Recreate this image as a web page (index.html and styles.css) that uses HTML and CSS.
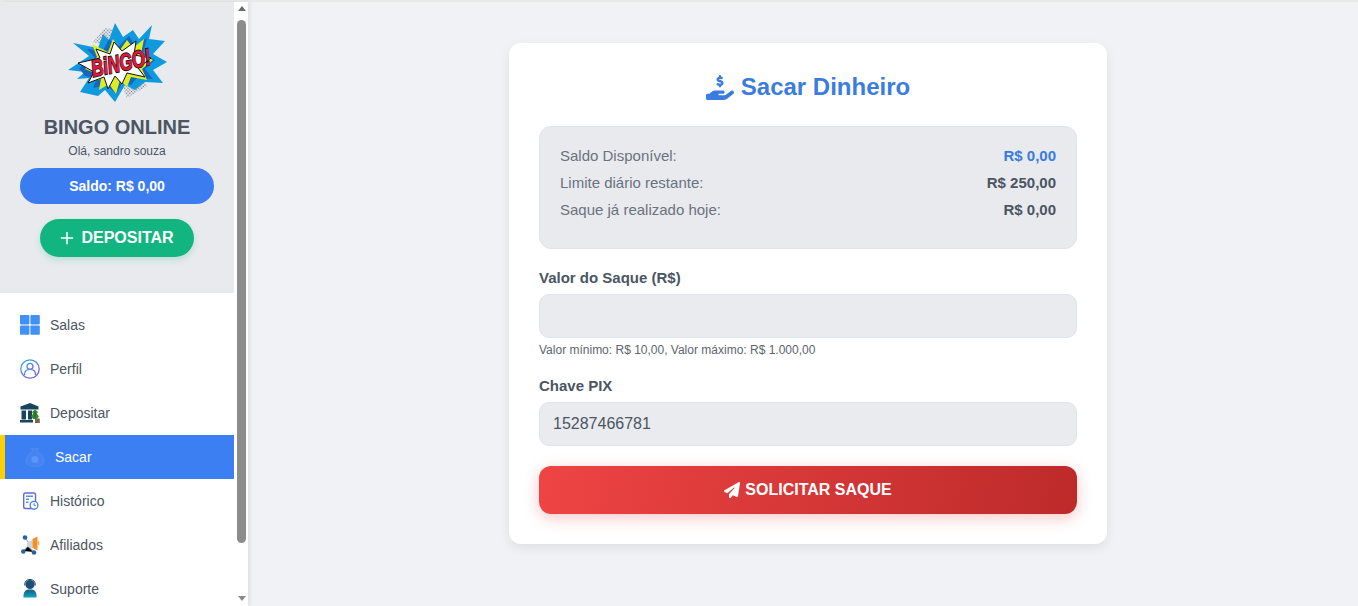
FILE: index.html
```html
<!DOCTYPE html>
<html lang="pt-BR">
<head>
<meta charset="utf-8">
<title>Sacar Dinheiro</title>
<link rel="stylesheet" href="styles.css">
</head>
<body>
<div class="layout">
  <aside class="sidebar">
    <div class="sidebar-content">
      <header class="profile">
        <svg class="logo" viewBox="0 0 100 80" aria-hidden="true">
          <defs>
            <pattern id="dots" width="2.400" height="2.400" patternUnits="userSpaceOnUse" patternTransform="rotate(45)"><circle cx="1.200" cy="1.200" r=".7" fill="#6a6f7c"/></pattern>
          </defs>
          <polygon fill="url(#dots)" points="26,20 38,6 52,8 48,26"/>
          <polygon fill="url(#dots)" points="52,54 74,50 80,64 60,76"/>
          <polygon fill="#0f9ae0" points="1,48 22,34 6,21 31,26 36,12 42,18 48,1 56,15 66,8 72,17 85,3 82,17 98,19 86,32 100,40 86,48 96,61 78,60 68,68 58,63 48,80 38,68 31,74 13,70 22,56 10,57 18,50"/>
          <polygon fill="#1766bd" points="12,46 28,36 20,27 36,29 42,17 50,26 62,14 68,24 80,16 76,31 88,38 78,47 86,57 70,56 64,63 56,60 49,72 40,63 26,66 30,56 18,54"/>
          <polygon fill="#dcef1e" points="18,47 30,35 25,22 41,30 46,17 53,28 60,18 66,26 77,17 74,32 86,38 75,47 80,58 64,55 60,65 53,58 49,72 42,62 32,68 34,57 22,60 28,51"/>
          <polygon fill="#fff" stroke="#111" stroke-width="1" points="11,41 33,36 29,27 43,32 47,20 55,29 69,19 67,33 84,36 71,46 78,55 60,51 55,62 48,54 41,67 37,55 21,61 27,50"/>
          <text class="logo-text" transform="rotate(-12 54 43) translate(54 49) scale(1 1.200)" text-anchor="middle" textLength="60" lengthAdjust="spacingAndGlyphs">BiNGO!</text>
        </svg>
        <h1 class="brand">BINGO ONLINE</h1>
        <p class="greeting">Olá, sandro souza</p>
        <div class="balance">Saldo: R$ 0,00</div>
        <a class="deposit-btn" href="#">
          <svg class="plus" viewBox="0 0 16 16" aria-hidden="true"><path d="M8 1v14M1 8h14"/></svg>
          DEPOSITAR
        </a>
      </header>
      <nav class="nav">
        <a class="nav-item" href="#">
          <svg class="nav-icon" viewBox="0 0 20 20" aria-hidden="true"><g fill="#4190f5"><rect x="0" y="0" width="9.400" height="9.400" rx=".8"/><rect x="10.400" y="0" width="9.400" height="9.400" rx=".8"/><rect x="0" y="10.400" width="9.400" height="9.400" rx=".8"/><rect x="10.400" y="10.400" width="9.400" height="9.400" rx=".8"/></g></svg>
          <span>Salas</span>
        </a>
        <a class="nav-item" href="#">
          <svg class="nav-icon" viewBox="0 0 20 20" aria-hidden="true"><defs><linearGradient id="pg" x1="0" y1="0" x2=".6" y2="1"><stop offset="0" stop-color="#38a6e6"/><stop offset="1" stop-color="#7d5fdc"/></linearGradient></defs><g fill="none" stroke="url(#pg)" stroke-width="1.300"><circle cx="10" cy="10" r="9.200"/><circle cx="10" cy="7.300" r="3"/><path d="M4.500 16c-.4-3.800 2.200-5.600 5.500-5.600s5.900 1.800 5.500 5.600"/></g></svg>
          <span>Perfil</span>
        </a>
        <a class="nav-item" href="#">
          <svg class="nav-icon" viewBox="0 0 20 20" aria-hidden="true"><path fill="#17455f" d="M10 0 18.500 3.500V6.500H.5V3.500zM1.500 7.500H6V16.500H1.500zM8 7.500H12V16.500H8zM0 17h13V19.500H0z"/><path fill="#3d8a2e" d="M15 6.500l3 2.500-1 1.800 2 2.700-2 2.500h-4l-2-2.500 2-2.700-1-1.800z"/><path fill="#1f6d2a" d="M14.300 9h1.400v6h-1.400z"/><path fill="#7d6650" d="M15 15.500h4.800V20H15z"/></svg>
          <span>Depositar</span>
        </a>
        <a class="nav-item is-active" href="#">
          <svg class="nav-icon" viewBox="0 0 20 20" aria-hidden="true"><path fill="#4684f3" stroke="#5590f5" stroke-width=".7" d="M6.500 1 10 2.200 13.500 1 12.500 4.800C16.500 6.800 19 10.500 19 14c0 3.800-3.500 5.500-9 5.500S1 17.800 1 14c0-3.500 2.500-7.200 6.500-9.200z"/><circle cx="10" cy="12.500" r="3.500" fill="#5a96f6"/></svg>
          <span>Sacar</span>
        </a>
        <a class="nav-item" href="#">
          <svg class="nav-icon" viewBox="0 0 20 20" aria-hidden="true"><rect x="3.700" y="2" width="11.800" height="15.500" rx="1.800" fill="#fff" stroke="#6a66d8" stroke-width="1.400"/><path stroke="#5b8fe0" stroke-width="1.400" d="M6 5.300h7M6 8.300h3M6 11.300h2.500"/><circle cx="14" cy="14.200" r="3.900" fill="#fff" stroke="#3f7fe0" stroke-width="1.300"/><path fill="none" stroke="#3f7fe0" stroke-width="1" d="M14 12.200V14.400h1.800"/></svg>
          <span>Histórico</span>
        </a>
        <a class="nav-item" href="#">
          <svg class="nav-icon" viewBox="0 0 20 20" aria-hidden="true"><path stroke="#9db2d0" stroke-width="1.100" d="M5 3 9 8M3.500 16 8 11l6 6"/><g fill="#2b5f9c"><circle cx="5" cy="2.500" r="2.300"/><circle cx="3.300" cy="16.500" r="2.300"/><circle cx="14" cy="17.500" r="2.300"/></g><path fill="#cfd4dc" d="M7 7.500l5.500-2.500v8.500L7 11.500z"/><path fill="#f0912c" d="M12.500 4 17.500 1.500v14l-5-2.500z"/><rect x="17.500" y="6" width="1.800" height="4" fill="#f8b552"/></svg>
          <span>Afiliados</span>
        </a>
        <a class="nav-item" href="#">
          <svg class="nav-icon" viewBox="0 0 20 20" aria-hidden="true"><defs><linearGradient id="sg" x1="0" y1="0" x2="0" y2="1"><stop offset="0" stop-color="#1d5a7c"/><stop offset="1" stop-color="#0ea5c9"/></linearGradient></defs><circle cx="10" cy="5.500" r="4.600" fill="#1d4e78"/><path fill="none" stroke="#14405f" stroke-width="1" d="M4.800 6.500c-.4-4 2-6 5.200-6s5.600 2 5.200 6"/><path fill="url(#sg)" d="M3.500 18.500c-.5-4.500 1.500-7.500 4.500-8h4c3 .5 5 3.500 4.500 8z"/></svg>
          <span>Suporte</span>
        </a>
      </nav>
    </div>
    <div class="scrollbar" aria-hidden="true">
      <span class="arrow arrow-up"></span>
      <span class="thumb"></span>
      <span class="arrow arrow-down"></span>
    </div>
  </aside>
  <main class="main">
    <section class="card">
      <h2 class="title">
        <svg class="title-icon" viewBox="0 0 576 512" aria-hidden="true"><path d="M312 24V34.500c6.400 1.200 12.600 2.700 18.200 4.200c12.800 3.400 20.400 16.600 17 29.400s-16.600 20.400-29.400 17c-10.900-2.900-21.100-4.900-30.200-5c-7.300-.1-14.700 1.700-19.400 4.400c-2.100 1.300-3.100 2.400-3.500 3c-.3 .5-.7 1.200-.7 2.800c0 .3 0 .5 0 .6c.2 .2 .9 1.200 3.300 2.600c5.800 3.500 14.400 6.200 27.400 10.100l.9 .3 0 0c11.100 3.300 25.900 7.800 37.900 15.300c13.700 8.600 26.100 22.900 26.400 44.900c.3 22.500-11.400 38.900-26.700 48.500c-6.700 4.100-13.900 7-21.300 8.800V232c0 13.300-10.700 24-24 24s-24-10.700-24-24V220.600c-9.500-2.300-18.200-5.300-25.600-7.800c-2.100-.7-4.100-1.400-6-2c-12.600-4.200-19.400-17.800-15.200-30.400s17.800-19.400 30.400-15.200c2.600 .9 5 1.700 7.300 2.500c13.600 4.600 23.400 7.900 33.900 8.300c8 .3 15.100-1.600 19.200-4.100c1.900-1.200 2.800-2.200 3.200-2.900c.4-.6 .9-1.800 .8-4.100l0-.2c0-1 0-2.100-4-4.600c-5.700-3.600-14.300-6.400-27.100-10.300l-1.900-.6c-10.800-3.200-25-7.500-36.400-14.400c-13.500-8.100-26.500-22-26.600-44.100c-.1-22.900 12.900-38.600 27.700-47.400c6.400-3.800 13.300-6.400 20.200-8.200V24c0-13.300 10.700-24 24-24s24 10.700 24 24zM568.200 336.300c13.100 17.800 9.300 42.800-8.500 55.900L433.100 485.500c-23.400 17.200-51.600 26.500-80.700 26.500H192 32c-17.700 0-32-14.300-32-32V416c0-17.700 14.300-32 32-32H68.800l44.900-36c22.700-18.200 50.900-28 80-28H272h16 64c17.700 0 32 14.300 32 32s-14.300 32-32 32H288 272c-8.800 0-16 7.200-16 16s7.200 16 16 16H392.600l119.700-88.200c17.800-13.100 42.800-9.300 55.900 8.500z"/></svg>
        Sacar Dinheiro
      </h2>
      <div class="summary">
        <div class="summary-row"><span>Saldo Disponível:</span><strong class="accent">R$ 0,00</strong></div>
        <div class="summary-row"><span>Limite diário restante:</span><strong>R$ 250,00</strong></div>
        <div class="summary-row"><span>Saque já realizado hoje:</span><strong>R$ 0,00</strong></div>
      </div>
      <form class="form">
        <div class="field">
          <label class="label" for="valor">Valor do Saque (R$)</label>
          <input class="input" id="valor" type="text">
          <small class="hint">Valor mínimo: R$ 10,00, Valor máximo: R$ 1.000,00</small>
        </div>
        <div class="field">
          <label class="label" for="pix">Chave PIX</label>
          <input class="input" id="pix" type="text" value="15287466781">
        </div>
        <button class="submit" type="button">
          <svg class="submit-icon" viewBox="0 0 512 512" aria-hidden="true"><path d="M498.100 5.600c10.100 7 15.400 19.100 13.500 31.200l-64 416c-1.500 9.700-7.400 18.200-16 23s-18.900 5.400-28 1.600L284 427.700l-68.500 74.100c-8.900 9.700-22.900 12.900-35.200 8.100S160 493.200 160 480V396.400c0-4 1.500-7.800 4.200-10.700L331.800 202.800c5.800-6.300 5.600-16-.4-22s-15.700-6.400-22-.7L106 360.800 17.700 316.600C7.100 311.300 .3 300.700 0 288.900s5.900-22.800 16.100-28.700l448-256c10.700-6.100 23.900-5.500 34 1.400z"/></svg>
          SOLICITAR SAQUE
        </button>
      </form>
    </section>
  </main>
</div>
</body>
</html>
```

FILE: styles.css
```css
* {
  box-sizing: border-box;
}

html,
body {
  height: 100%;
  margin: 0;
  overflow: hidden;
}

body {
  background: #f0f2f5;
  color: #4b5563;
  font-family: "Liberation Sans", Arial, sans-serif;
}

a {
  color: inherit;
  text-decoration: none;
}

.layout {
  display: flex;
  height: 100%;
  border-top: 2px solid #e9e9ea;
}

.sidebar {
  display: flex;
  flex: 0 0 248px;
  height: 100%;
  background: #fff;
  box-shadow: 2px 0 4px rgba(0, 0, 0, 0.08);
  overflow: hidden;
}

.sidebar-content {
  flex: 0 0 234px;
}

.profile {
  display: flex;
  flex-direction: column;
  align-items: center;
  height: 291px;
  padding-top: 20px;
  background: #e8eaee;
}

.logo {
  display: block;
  width: 100px;
  height: 80px;
}

.logo-text {
  fill: #e3173e;
  stroke: #111;
  stroke-width: 1.4px;
  paint-order: stroke;
  font-family: "Liberation Sans", Arial, sans-serif;
  font-size: 20px;
  font-style: italic;
  font-weight: 700;
}

.brand {
  margin: 13px 0 0;
  color: #4b5563;
  font-size: 20px;
  line-height: 24px;
  font-weight: 700;
}

.greeting {
  margin: 4px 0 0;
  font-size: 12px;
  line-height: 16px;
}

.balance {
  width: 194px;
  height: 36px;
  margin-top: 9px;
  border-radius: 18px;
  background: #3b7cf0;
  color: #fff;
  font-size: 14px;
  font-weight: 700;
  line-height: 36px;
  text-align: center;
}

.deposit-btn {
  display: flex;
  align-items: center;
  justify-content: center;
  gap: 7px;
  width: 154px;
  height: 38px;
  margin-top: 15px;
  border-radius: 19px;
  background: #12b57f;
  box-shadow: 0 3px 6px rgba(16, 185, 129, 0.22);
  color: #fff;
  font-size: 16px;
  font-weight: 700;
}

.plus {
  width: 14px;
  height: 14px;
  fill: none;
  stroke: #fff;
  stroke-width: 1.8;
}

.nav {
  padding-top: 10px;
}

.nav-item {
  display: flex;
  align-items: center;
  gap: 10px;
  height: 44px;
  padding-left: 20px;
  color: #4b5563;
  font-size: 14px;
}

.nav-item.is-active {
  border-left: 5px solid #ffd000;
  background: #3b7ff2;
  color: #fff;
}

.nav-icon {
  flex: none;
  width: 20px;
  height: 20px;
}

.scrollbar {
  display: flex;
  flex: 0 0 14px;
  flex-direction: column;
  align-items: center;
  padding-left: 1px;
  background: #fff;
}

.arrow {
  flex: none;
  width: 0;
  height: 0;
  border-left: 4px solid transparent;
  border-right: 4px solid transparent;
}

.arrow-up {
  margin: 4px 0 9px;
  border-bottom: 5px solid #6a6a6a;
}

.arrow-down {
  margin: auto 0 5px;
  border-top: 5px solid #8a8a8a;
}

.thumb {
  flex: none;
  width: 9px;
  height: 523px;
  border-radius: 5px;
  background: #8c8c8c;
}

.main {
  flex: 1;
  display: flex;
  justify-content: center;
  align-items: flex-start;
  padding: 41px 0 0 10px;
  min-width: 0;
}

.card {
  width: 598px;
  height: 501px;
  padding: 30px;
  border-radius: 12px;
  background: #fff;
  box-shadow: 0 4px 12px rgba(0, 0, 0, 0.08);
}

.title {
  display: flex;
  align-items: center;
  justify-content: center;
  gap: 7px;
  height: 28px;
  margin: 0 0 25px;
  color: #3b7cdf;
  font-size: 24px;
  line-height: 28px;
  font-weight: 700;
}

.title-icon {
  width: 28px;
  height: 25px;
  fill: #3b7cdf;
}

.summary {
  height: 123px;
  padding: 15px 20px;
  border: 1px solid #e0e3e8;
  border-radius: 12px;
  background: #e8eaee;
  font-size: 15px;
}

.summary-row {
  display: flex;
  justify-content: space-between;
  align-items: center;
  height: 27px;
  color: #6b7280;
}

.summary-row strong {
  color: #4b5563;
  font-size: 15px;
}

.summary-row .accent {
  color: #3b7cdf;
}

.form {
  display: flex;
  flex-direction: column;
}

.field {
  display: flex;
  flex-direction: column;
  margin-top: 19px;
}

.label {
  margin-bottom: 7px;
  color: #4b5563;
  font-size: 15px;
  line-height: 19px;
  font-weight: 700;
}

.input {
  width: 100%;
  height: 44px;
  padding: 0 13px;
  border: 1px solid #e0e3e8;
  border-radius: 10px;
  background: #e9ebee;
  color: #4b5563;
  font-family: "Liberation Sans", Arial, sans-serif;
  font-size: 16px;
}

.hint {
  margin-top: 5px;
  color: #5d6570;
  font-size: 12px;
  line-height: 14px;
}

.submit {
  display: flex;
  align-items: center;
  justify-content: center;
  gap: 5px;
  height: 48px;
  margin-top: 20px;
  border: 0;
  border-radius: 12px;
  background: linear-gradient(100deg, #ef4444, #bd2a2a);
  box-shadow: 0 4px 15px rgba(239, 68, 68, 0.3);
  color: #fff;
  font-family: "Liberation Sans", Arial, sans-serif;
  font-size: 16px;
  font-weight: 700;
}

.submit-icon {
  width: 16px;
  height: 16px;
  fill: #fff;
}
```
